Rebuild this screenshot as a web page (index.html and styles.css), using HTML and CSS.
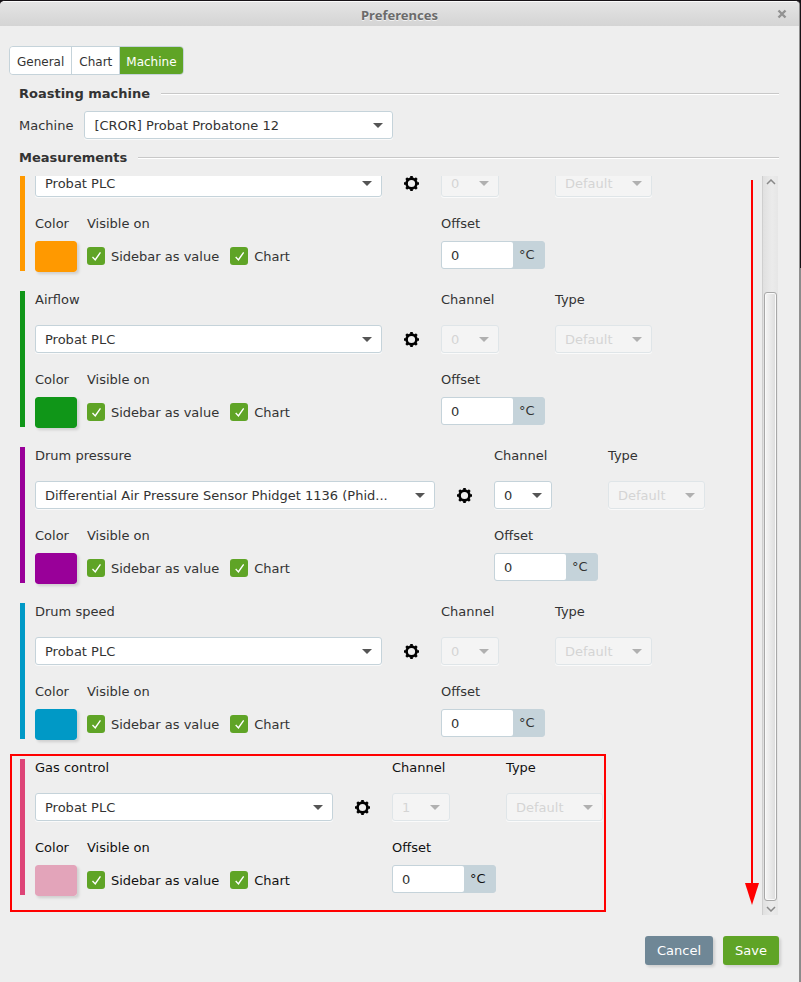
FILE: index.html
```html
<!DOCTYPE html>
<html lang="en">
<head>
    <meta charset="UTF-8">
    <meta name="viewport" content="width=device-width, initial-scale=1.0">
    <link rel="stylesheet" href="styles.css">
    <title>Preferences</title>
</head>
<body>
    <svg class="sprite" aria-hidden="true">
        <symbol id="gear" viewBox="0 0 15 15">
            <circle cx="7.5" cy="7.5" r="4.900" fill="none" stroke="#000" stroke-width="2.600"/>
            <path d="M7.500 0v3M7.500 12v3M0 7.500h3M12 7.500h3M2.200 2.200l2 2M10.800 10.800l2 2M2.200 12.800l2-2M10.800 4.200l2-2" stroke="#000" stroke-width="2.600"/>
        </symbol>
    </svg>
    <div class="window">
        <header class="titlebar">
            <h1>Preferences</h1>
            <button class="close" aria-label="Close">
                <svg width="10" height="10" viewBox="0 0 10 10"><path d="M1.500 1.500l7 7M8.500 1.500l-7 7" stroke="#929292" stroke-width="2.400"/></svg>
            </button>
        </header>
        <main>
            <nav class="tabs">
                <button>General</button>
                <button>Chart</button>
                <button class="active">Machine</button>
            </nav>
            <h2>Roasting machine</h2>
            <div class="machine">
                <label for="machine">Machine</label>
                <span class="select"><select id="machine"><option>[CROR] Probat Probatone 12</option></select></span>
            </div>
            <h2>Measurements</h2>
            <div class="measurements">
                <div class="list">
                    <section class="group orange">
                        <div class="row">
                            <span class="select"><select aria-label="Device"><option>Probat PLC</option></select></span>
                            <button class="settings" aria-label="Settings"><svg><use href="#gear"/></svg></button>
                            <span class="select channel"><select aria-label="Channel" disabled><option>0</option></select></span>
                            <span class="select type"><select aria-label="Type" disabled><option>Default</option></select></span>
                        </div>
                        <div class="row">
                            <div class="display">
                                <div class="field">
                                    <label for="color1">Color</label>
                                    <input type="color" id="color1" value="#ff9900">
                                </div>
                                <div class="field">
                                    <span>Visible on</span>
                                    <div class="checks">
                                        <label><input type="checkbox" checked>Sidebar as value</label>
                                        <label><input type="checkbox" checked>Chart</label>
                                    </div>
                                </div>
                            </div>
                            <div class="field offset">
                                <label for="offset1">Offset</label>
                                <div class="unit"><input type="text" id="offset1" value="0"><span>°C</span></div>
                            </div>
                        </div>
                    </section>

                    <section class="group green">
                        <div class="row">
                            <div class="field">
                                <label for="device2">Airflow</label>
                                <span class="select"><select id="device2"><option>Probat PLC</option></select></span>
                            </div>
                            <button class="settings" aria-label="Settings"><svg><use href="#gear"/></svg></button>
                            <div class="field">
                                <label for="channel2">Channel</label>
                                <span class="select channel"><select id="channel2" disabled><option>0</option></select></span>
                            </div>
                            <div class="field">
                                <label for="type2">Type</label>
                                <span class="select type"><select id="type2" disabled><option>Default</option></select></span>
                            </div>
                        </div>
                        <div class="row">
                            <div class="display">
                                <div class="field">
                                    <label for="color2">Color</label>
                                    <input type="color" id="color2" value="#109618">
                                </div>
                                <div class="field">
                                    <span>Visible on</span>
                                    <div class="checks">
                                        <label><input type="checkbox" checked>Sidebar as value</label>
                                        <label><input type="checkbox" checked>Chart</label>
                                    </div>
                                </div>
                            </div>
                            <div class="field offset">
                                <label for="offset2">Offset</label>
                                <div class="unit"><input type="text" id="offset2" value="0"><span>°C</span></div>
                            </div>
                        </div>
                    </section>

                    <section class="group purple">
                        <div class="row">
                            <div class="field">
                                <label for="device3">Drum pressure</label>
                                <span class="select"><select id="device3"><option>Differential Air Pressure Sensor Phidget 1136 (Phid...</option></select></span>
                            </div>
                            <button class="settings" aria-label="Settings"><svg><use href="#gear"/></svg></button>
                            <div class="field">
                                <label for="channel3">Channel</label>
                                <span class="select channel"><select id="channel3"><option>0</option></select></span>
                            </div>
                            <div class="field">
                                <label for="type3">Type</label>
                                <span class="select type"><select id="type3" disabled><option>Default</option></select></span>
                            </div>
                        </div>
                        <div class="row">
                            <div class="display">
                                <div class="field">
                                    <label for="color3">Color</label>
                                    <input type="color" id="color3" value="#990099">
                                </div>
                                <div class="field">
                                    <span>Visible on</span>
                                    <div class="checks">
                                        <label><input type="checkbox" checked>Sidebar as value</label>
                                        <label><input type="checkbox" checked>Chart</label>
                                    </div>
                                </div>
                            </div>
                            <div class="field offset">
                                <label for="offset3">Offset</label>
                                <div class="unit"><input type="text" id="offset3" value="0"><span>°C</span></div>
                            </div>
                        </div>
                    </section>

                    <section class="group blue">
                        <div class="row">
                            <div class="field">
                                <label for="device4">Drum speed</label>
                                <span class="select"><select id="device4"><option>Probat PLC</option></select></span>
                            </div>
                            <button class="settings" aria-label="Settings"><svg><use href="#gear"/></svg></button>
                            <div class="field">
                                <label for="channel4">Channel</label>
                                <span class="select channel"><select id="channel4" disabled><option>0</option></select></span>
                            </div>
                            <div class="field">
                                <label for="type4">Type</label>
                                <span class="select type"><select id="type4" disabled><option>Default</option></select></span>
                            </div>
                        </div>
                        <div class="row">
                            <div class="display">
                                <div class="field">
                                    <label for="color4">Color</label>
                                    <input type="color" id="color4" value="#0099c6">
                                </div>
                                <div class="field">
                                    <span>Visible on</span>
                                    <div class="checks">
                                        <label><input type="checkbox" checked>Sidebar as value</label>
                                        <label><input type="checkbox" checked>Chart</label>
                                    </div>
                                </div>
                            </div>
                            <div class="field offset">
                                <label for="offset4">Offset</label>
                                <div class="unit"><input type="text" id="offset4" value="0"><span>°C</span></div>
                            </div>
                        </div>
                    </section>

                    <section class="group pink marked">
                        <div class="row">
                            <div class="field">
                                <label for="device5">Gas control</label>
                                <span class="select"><select id="device5"><option>Probat PLC</option></select></span>
                            </div>
                            <button class="settings" aria-label="Settings"><svg><use href="#gear"/></svg></button>
                            <div class="field">
                                <label for="channel5">Channel</label>
                                <span class="select channel"><select id="channel5" disabled><option>1</option></select></span>
                            </div>
                            <div class="field">
                                <label for="type5">Type</label>
                                <span class="select type"><select id="type5" disabled><option>Default</option></select></span>
                            </div>
                        </div>
                        <div class="row">
                            <div class="display">
                                <div class="field">
                                    <label for="color5">Color</label>
                                    <input type="color" id="color5" value="#e3a4ba">
                                </div>
                                <div class="field">
                                    <span>Visible on</span>
                                    <div class="checks">
                                        <label><input type="checkbox" checked>Sidebar as value</label>
                                        <label><input type="checkbox" checked>Chart</label>
                                    </div>
                                </div>
                            </div>
                            <div class="field offset">
                                <label for="offset5">Offset</label>
                                <div class="unit"><input type="text" id="offset5" value="0"><span>°C</span></div>
                            </div>
                        </div>
                    </section>
                </div>
                <div class="arrow"></div>
                <div class="scrollbar">
                    <svg width="10" height="6" viewBox="0 0 10 6"><path d="M1 5l4-4 4 4" fill="none" stroke="#888" stroke-width="1.500"/></svg>
                    <div class="thumb"></div>
                    <svg width="10" height="6" viewBox="0 0 10 6"><path d="M1 1l4 4 4-4" fill="none" stroke="#888" stroke-width="1.500"/></svg>
                </div>
            </div>
            <footer>
                <button class="cancel">Cancel</button>
                <button class="save">Save</button>
            </footer>
        </main>
    </div>
</body>
</html>
```
FILE: styles.css
```css
*, ::after, ::before{
    margin: 0;
    padding: 0;
    box-sizing: border-box;
}
body{
    height: 100vh;
    background: linear-gradient(#161216 268px, #8a8a8a 268px);
    font-family: "DejaVu Sans", sans-serif;
    font-size: 13px;
    line-height: 16px;
    color: #333;
}
button, input, select{
    font: inherit;
    color: inherit;
    border: none;
}
.sprite{
    position: absolute;
    width: 0;
    height: 0;
}
.window{
    display: flex;
    flex-direction: column;
    height: 100vh;
    margin-right: 1px;
    border-top: 1px solid #161216;
    border-right: 1px solid #8e8e8e;
    border-radius: 5px 5px 0 0;
    background: #eee;
    overflow: hidden;
}
.titlebar{
    display: grid;
    grid-template-columns: 1fr auto 1fr;
    align-items: center;
    height: 25px;
    padding: 2px 10px 0;
    border-top: 1px solid #fafafa;
    background: linear-gradient(#e4e4e4, #d4d4d4);
    h1{
        grid-column: 2;
        font: bold 13px/18px "Noto Sans", sans-serif;
        color: #6b6b6b;
        text-shadow: 0 1px #f2f2f2;
    }
    .close{
        display: flex;
        justify-self: end;
        background: none;
        padding: 0 2px 2px;
    }
}
main{
    display: flex;
    flex-direction: column;
    flex: 1;
    min-height: 0;
    padding: 20px 20px 17px 9px;
}
.tabs{
    display: flex;
    align-self: flex-start;
    border: 1px solid #c5d3da;
    border-radius: 4px;
    overflow: hidden;
    margin-bottom: 10px;
    font-size: 12px;
    button{
        height: 27px;
        padding: 2px 7px 0;
        background: #fff;
        border-right: 1px solid #c5d3da;
    }
    .active{
        padding: 2px 6px 0;
        background: #5fa426;
        color: #fff;
        border: none;
    }
}
h2{
    display: flex;
    align-items: center;
    gap: 11px;
    padding-left: 10px;
    font-size: 13px;
    line-height: 18px;
    &::after{
        content: '';
        flex: 1;
        height: 2px;
        border-top: 1px solid #c8c8c8;
        background: #fff;
    }
}
.machine{
    display: flex;
    align-items: center;
    gap: 11px;
    padding: 8px 10px 10px;
    line-height: 17px;
    .select{
        width: 309px;
    }
}
.select{
    display: block;
    position: relative;
    select{
        display: block;
        appearance: none;
        width: 100%;
        height: 28px;
        padding: 0 20px 0 9px;
        background: #fff;
        border: 1px solid #c5d3da;
        border-radius: 3px;
        box-shadow: 0 1px #fafafa;
        line-height: 17px;
    }
    select:disabled{
        background: #f4f4f4;
        border-color: #dfe5e8;
        color: #d4d4d4;
        opacity: 1;
    }
    &::after{
        content: '';
        position: absolute;
        top: 12px;
        right: 10px;
        border: 5px solid transparent;
        border-top-color: #555;
        border-bottom: none;
        pointer-events: none;
    }
    &:has(:disabled)::after{
        border-top-color: #b0b0b0;
    }
}
.channel{
    width: 58px;
}
.type{
    width: 97px;
}
.measurements{
    display: flex;
    flex: 1;
    min-height: 0;
    margin-top: 9px;
    padding-right: 1px;
}
/* the list is scrolled to its end */
.list{
    display: flex;
    flex-direction: column;
    justify-content: flex-end;
    gap: 20px;
    flex: 1;
    padding: 0 0 20px 11px;
    overflow: hidden;
}
.group{
    --device: 347px;
    display: flex;
    flex-direction: column;
    flex-shrink: 0;
    gap: 18px;
    align-self: flex-start;
    position: relative;
    padding-left: 10px;
    border-left: 5px solid;
    .row{
        display: grid;
        grid-template-columns: var(--device) 59px 114px auto;
        align-items: end;
        color: #333;
    }
    .field{
        display: flex;
        flex-direction: column;
        gap: 17px;
        line-height: 17px;
    }
    .row:last-child{
        height: 56px;
        align-items: start;
        .field{
            gap: 9px;
        }
    }
}
.orange{
    border-color: #ff9900;
}
.green{
    border-color: #109618;
}
.purple{
    --device: 400px;
    border-color: #990099;
}
.blue{
    border-color: #0099c6;
}
.pink{
    --device: 298px;
    border-color: #dd4477;
    .row{
        color: #111;
    }
    select:enabled, .unit input{
        color: #333;
    }
}
.marked::before{
    content: '';
    position: absolute;
    inset: -5px -3px -17px -15px;
    border: 2px solid #f00;
    pointer-events: none;
}
.settings{
    display: flex;
    align-items: center;
    height: 28px;
    padding-left: 22px;
    background: none;
    svg{
        width: 15px;
        height: 15px;
    }
}
.display{
    display: flex;
    gap: 10px;
}
input[type="color"]{
    appearance: none;
    width: 42px;
    height: 31px;
    background: none;
    border-radius: 3px;
    box-shadow: 2px 2px 3px #0002;
    &::-webkit-color-swatch-wrapper{
        padding: 0;
    }
    &::-webkit-color-swatch{
        border: none;
        border-radius: 3px;
    }
}
.checks{
    display: flex;
    align-items: center;
    gap: 11px;
    height: 30px;
    label{
        display: flex;
        align-items: center;
        gap: 6px;
    }
    input{
        appearance: none;
        width: 18px;
        height: 18px;
        padding: 5px;
        background: #5fa426;
        border-radius: 3px;
        &::after{
            content: '';
            display: block;
            width: 9px;
            height: 9px;
            background: #fff;
            clip-path: polygon(0 60%, 11% 49%, 34% 74%, 88% 0, 100% 9%, 37% 100%);
        }
    }
}
.offset{
    grid-column: 3;
}
.unit{
    display: flex;
    align-items: center;
    width: 104px;
    height: 28px;
    border: 1px solid #c5d3da;
    border-radius: 3px;
    background: #c5d3da;
    input{
        width: 71px;
        height: 26px;
        padding-left: 9px;
        background: #fff;
        border-radius: 2px;
    }
    span{
        padding: 0 6px;
        line-height: 18px;
    }
}
/* line with a head at the bottom, left of the scrollbar */
.arrow{
    display: flex;
    flex-direction: column;
    align-items: center;
    width: 14px;
    margin: 4px 3px 10px 0;
    &::before{
        content: '';
        flex: 1;
        width: 2px;
        background: #f00;
    }
    &::after{
        content: '';
        border: 7px solid transparent;
        border-top: 22px solid #f00;
        border-bottom: none;
    }
}
.scrollbar{
    display: flex;
    flex-direction: column;
    align-items: center;
    width: 16px;
    padding: 3px 0;
    border-left: 1px solid #cfcfcf;
    background: linear-gradient(90deg, #e0e0e0, #ebebeb 60%, #e6e6e6);
    .thumb{
        flex: 1;
        width: 13px;
        margin: 107px 0 5px;
        border: 1px solid #a8a8a8;
        border-radius: 3px;
        background: linear-gradient(90deg, #f6f6f6, #dcdcdc);
        box-shadow: inset 0 0 0 1px #fafafa;
    }
}
footer{
    display: flex;
    justify-content: flex-end;
    gap: 10px;
    margin-top: 21px;
    button{
        height: 29px;
        padding: 0 12px;
        border-radius: 3px;
        color: #fff;
        box-shadow: 2px 2px 3px #0002;
    }
    .cancel{
        background: #6f8796;
    }
    .save{
        background: #5fa426;
    }
}
```
